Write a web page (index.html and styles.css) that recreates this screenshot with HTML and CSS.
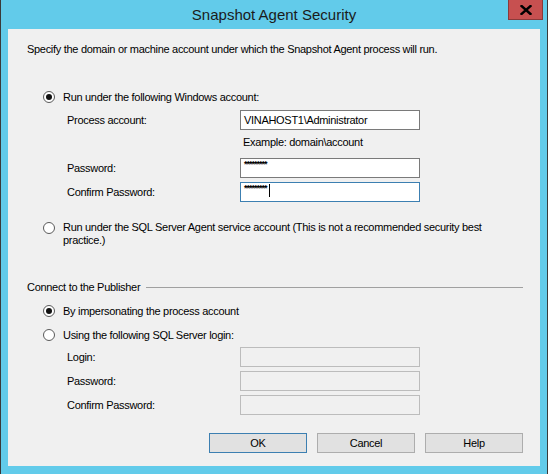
FILE: index.html
```html
<!DOCTYPE html>
<html>
<head>
<meta charset="utf-8">
<link rel="stylesheet" href="styles.css">
</head>
<body>
<div class="window">
  <div class="titlebar">
    <div class="title">Snapshot Agent Security</div>
    <div class="close"><svg width="12" height="10" viewBox="0 0 12 10"><path d="M1.5 1 L10.5 9 M10.5 1 L1.5 9" stroke="#000" stroke-width="2.4" stroke-linecap="square"/></svg></div>
  </div>
  <div class="panel">
    <p class="intro">Specify the domain or machine account under which the Snapshot Agent process will run.</p>

    <div class="radio-row r1"><span class="radio checked"></span><span>Run under the following Windows account:</span></div>
    <div class="field-row f-process"><span class="label">Process account:</span><div class="box">VINAHOST1\Administrator</div></div>
    <div class="example">Example: domain\account</div>
    <div class="field-row f-pass"><span class="label">Password:</span><div class="box pw">*********</div></div>
    <div class="field-row f-confirm"><span class="label">Confirm Password:</span><div class="box pw focus">*********<span class="caret"></span></div></div>

    <div class="radio-row r2 wrap"><span class="radio"></span><span class="wrap-text">Run under the SQL Server Agent service account (This is not a recommended security best practice.)</span></div>

    <div class="group-head"><span>Connect to the Publisher</span><span class="rule"></span></div>
    <div class="radio-row r3"><span class="radio checked"></span><span>By impersonating the process account</span></div>
    <div class="radio-row r4"><span class="radio"></span><span>Using the following SQL Server login:</span></div>
    <div class="field-row f-login"><span class="label">Login:</span><div class="box disabled"></div></div>
    <div class="field-row f-dis"><span class="label">Password:</span><div class="box disabled"></div></div>
    <div class="field-row f-dis"><span class="label">Confirm Password:</span><div class="box disabled"></div></div>

    <div class="buttons">
      <div class="btn default">OK</div>
      <div class="btn">Cancel</div>
      <div class="btn">Help</div>
    </div>
  </div>
</div>
</body>
</html>
```
FILE: styles.css
```css
* { box-sizing: border-box; }
html, body { margin: 0; padding: 0; }
body {
  width: 548px;
  height: 474px;
  overflow: hidden;
  font-family: "Liberation Sans", Arial, sans-serif;
  font-size: 11px;
  letter-spacing: -0.3px;
  color: #000;
}
.window {
  width: 548px;
  height: 474px;
  background: #62cbea;
  border-left: 1px solid #3a3a3a;
  border-right: 1px solid #3a3a3a;
  display: flex;
  flex-direction: column;
}
.titlebar {
  height: 29px;
  position: relative;
  display: flex;
  justify-content: center;
  align-items: flex-start;
}
.title {
  font-family: "Liberation Sans", Arial, sans-serif;
  font-size: 15px;
  letter-spacing: 0;
  color: #1b1b1b;
  margin-top: 6px;
}
.close {
  position: absolute;
  right: 4px;
  top: 0;
  width: 35px;
  height: 20px;
  background: #c75050;
  border: 1px solid #8a3a3a;
  border-top: none;
  display: flex;
  align-items: center;
  justify-content: center;
}
.panel {
  margin: 0 7px 0 7px;
  height: 437px;
  background: #f0f0f0;
  position: relative;
  display: flex;
  flex-direction: column;
  padding-left: 19px;
}
.intro {
  margin: 12px 0 0 0;
  line-height: 16px;
}
.radio-row {
  display: flex;
  align-items: center;
  height: 16px;
  line-height: 16px;
  padding-left: 16px;
}
.radio {
  width: 12px;
  height: 12px;
  border-radius: 50%;
  border: 1px solid #5a5a5a;
  background: #fff;
  margin-right: 8px;
  flex: none;
  position: relative;
}
.radio.checked::after {
  content: "";
  position: absolute;
  left: 2px;
  top: 2px;
  width: 6px;
  height: 6px;
  border-radius: 50%;
  background: #111;
}
.r1 { margin-top: 32px; }
.field-row {
  display: flex;
  align-items: center;
  height: 20px;
  padding-left: 40px;
}
.label { width: 173px; flex: none; }
.box {
  width: 180px;
  height: 20px;
  border: 1px solid #7a7a7a;
  background: #fff;
  padding-left: 3px;
  line-height: 18px;
  white-space: nowrap;
}
.f-process { margin-top: 5px; }
.example { margin: 4px 0 0 216px; height: 16px; line-height: 16px; }
.f-pass { margin-top: 8px; }
.f-confirm { margin-top: 4px; }
.pw { font-size: 9px; line-height: 11px; letter-spacing: -1px; font-weight: bold; }
.focus { border-color: #3c7fb1; }
.caret {
  display: inline-block;
  width: 1px;
  height: 13px;
  background: #000;
  vertical-align: top;
  margin-left: 2px;
  margin-top: 1px;
}
.r2 { margin-top: 19px; }
.wrap { align-items: flex-start; height: auto; line-height: 13px; }
.wrap .radio { margin-top: 1px; }
.wrap-text { width: 435px; }
.group-head {
  display: flex;
  align-items: center;
  height: 16px;
  margin-top: 32px;
  padding-right: 17px;
}
.rule {
  flex: 1;
  height: 1px;
  background: #a0a0a0;
  margin-left: 6px;
}
.r3 { margin-top: 8px; }
.r4 { margin-top: 8px; }
.disabled { border-color: #bcbcbc; background: #f0f0f0; }
.f-login { margin-top: 4px; }
.f-dis { margin-top: 4px; }
.buttons {
  display: flex;
  gap: 10px;
  margin-top: 18px;
  padding-left: 182px;
}
.btn {
  width: 98px;
  height: 20px;
  background: #e1e1e1;
  border: 1px solid #adadad;
  text-align: center;
  line-height: 18px;
}
.btn.default { border-color: #3c7fb1; }
```
